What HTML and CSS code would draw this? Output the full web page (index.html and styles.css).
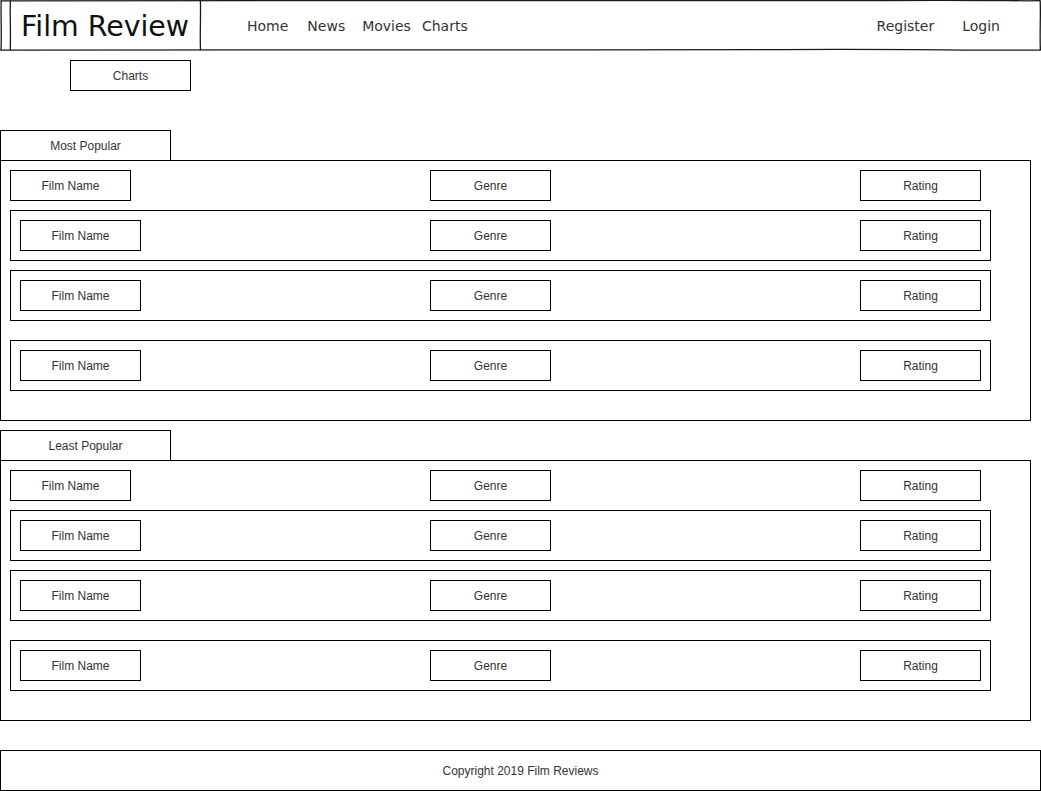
FILE: index.html
```html
<!DOCTYPE html>
<html lang="en">
<head>
<meta charset="utf-8">
<title>Film Review</title>
<link rel="stylesheet" href="styles.css">
</head>
<body>
<header class="topbar">
  <svg class="sketch" viewBox="0 0 1041 51" width="1041" height="51" aria-hidden="true">
    <path d="M0.5 0.8 C120 0.2 240 1.6 380 0.6 S700 1.4 860 0.5 S1000 1.2 1040.5 0.7" />
    <path d="M0.5 50.2 C90 49.4 200 50.9 330 49.8 S620 50.8 760 49.7 S960 50.6 1040.5 50.1" />
    <path d="M1.2 0.5 C0.6 15 1.8 32 1.0 50.5" />
    <path d="M1040.2 0.5 C1040.8 18 1039.6 34 1040.4 50.5" />
    <path d="M10.4 0.5 C9.8 17 11 33 10.2 50.5" />
    <path d="M200.4 0.5 C200.9 16 199.8 34 200.5 50.5" />
  </svg>
  <div class="brand">Film Review</div>
  <nav class="nav">
    <span class="nav-link home">Home</span>
    <span class="nav-link news">News</span>
    <span class="nav-link movies">Movies</span>
    <span class="nav-link charts">Charts</span>
  </nav>
  <div class="account">
    <span class="nav-link register">Register</span>
    <span class="nav-link login">Login</span>
  </div>
</header>

<div class="page-btn">Charts</div>

<section class="chart-section first">
  <div class="tab">Most Popular</div>
  <div class="panel">
    <div class="head-row">
      <div class="cell name">Film Name</div>
      <div class="cell genre">Genre</div>
      <div class="cell rating">Rating</div>
    </div>
    <div class="row">
      <div class="cell name">Film Name</div>
      <div class="cell genre">Genre</div>
      <div class="cell rating">Rating</div>
    </div>
    <div class="row">
      <div class="cell name">Film Name</div>
      <div class="cell genre">Genre</div>
      <div class="cell rating">Rating</div>
    </div>
    <div class="row last">
      <div class="cell name">Film Name</div>
      <div class="cell genre">Genre</div>
      <div class="cell rating">Rating</div>
    </div>
  </div>
</section>

<section class="chart-section second">
  <div class="tab">Least Popular</div>
  <div class="panel">
    <div class="head-row">
      <div class="cell name">Film Name</div>
      <div class="cell genre">Genre</div>
      <div class="cell rating">Rating</div>
    </div>
    <div class="row">
      <div class="cell name">Film Name</div>
      <div class="cell genre">Genre</div>
      <div class="cell rating">Rating</div>
    </div>
    <div class="row">
      <div class="cell name">Film Name</div>
      <div class="cell genre">Genre</div>
      <div class="cell rating">Rating</div>
    </div>
    <div class="row last">
      <div class="cell name">Film Name</div>
      <div class="cell genre">Genre</div>
      <div class="cell rating">Rating</div>
    </div>
  </div>
</section>

<footer class="footer">Copyright 2019 Film Reviews</footer>
</body>
</html>
```

FILE: styles.css
```css
* {
  box-sizing: border-box;
}

html, body {
  margin: 0;
  padding: 0;
  background: #ffffff;
}

body {
  width: 1041px;
  font-family: "Liberation Sans", Arial, sans-serif;
  font-size: 12px;
  color: #333333;
}

/* ---------- header ---------- */
.topbar {
  position: relative;
  height: 51px;
  display: flex;
  align-items: stretch;
}

.sketch {
  position: absolute;
  left: 0;
  top: 0;
  pointer-events: none;
}

.sketch path {
  fill: none;
  stroke: #1a1a1a;
  stroke-width: 1.3;
}

.brand {
  margin-left: 10px;
  width: 191px;
  height: 51px;
  padding-left: 11px;
  font-family: "DejaVu Sans", Verdana, sans-serif;
  font-size: 28.4px;
  line-height: 54px;
  color: #111111;
  white-space: nowrap;
}

.nav,
.account {
  display: flex;
  align-items: center;
  padding-top: 1px;
}

.nav-link {
  font-family: "DejaVu Sans", Verdana, sans-serif;
  font-size: 14px;
  color: #333333;
  white-space: nowrap;
}

.home { margin-left: 46px; }
.news { margin-left: 19px; }
.movies { margin-left: 17px; }
.charts { margin-left: 11px; }

.account {
  margin-left: auto;
  margin-right: 41px;
}

.login { margin-left: 28px; }

/* ---------- charts button ---------- */
.page-btn {
  margin: 9px 0 0 70px;
  width: 121px;
  height: 31px;
  border: 1px solid #000;
  display: flex;
  align-items: center;
  justify-content: center;
}

/* ---------- sections ---------- */
.chart-section.first {
  margin-top: 39px;
}

.chart-section.second {
  margin-top: 9px;
}

.tab {
  width: 171px;
  height: 30px;
  border: 1px solid #000;
  border-bottom: none;
  display: flex;
  align-items: center;
  justify-content: center;
  padding-top: 1px;
}

.panel {
  width: 1031px;
  height: 261px;
  border: 1px solid #000;
  padding: 9px;
  display: flex;
  flex-direction: column;
}

.cell {
  width: 121px;
  height: 31px;
  border: 1px solid #000;
  display: flex;
  align-items: center;
  justify-content: center;
  flex: none;
}

.head-row {
  display: flex;
  width: 971px;
}

.head-row .genre { margin-left: 299px; }
.head-row .rating { margin-left: 309px; }

.row {
  margin-top: 9px;
  width: 981px;
  height: 51px;
  border: 1px solid #000;
  padding: 9px;
  display: flex;
}

.row.last {
  margin-top: 19px;
}

.row .genre { margin-left: 289px; }
.row .rating { margin-left: 309px; }

/* ---------- footer ---------- */
.footer {
  margin-top: 29px;
  width: 1041px;
  height: 41px;
  border: 1px solid #000;
  display: flex;
  align-items: center;
  justify-content: center;
}
```
